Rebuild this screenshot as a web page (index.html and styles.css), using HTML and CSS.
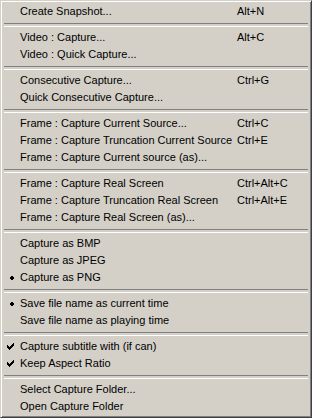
FILE: index.html
```html
<!DOCTYPE html>
<html>
<head>
<meta charset="utf-8">
<link rel="stylesheet" href="styles.css">
</head>
<body>
<div class="menu">
  <div class="item"><span class="mark"></span><span class="label">Create Snapshot...</span><span class="key">Alt+N</span></div>
  <div class="sep"></div>
  <div class="item"><span class="mark"></span><span class="label">Video : Capture...</span><span class="key">Alt+C</span></div>
  <div class="item"><span class="mark"></span><span class="label">Video : Quick Capture...</span><span class="key"></span></div>
  <div class="sep"></div>
  <div class="item"><span class="mark"></span><span class="label">Consecutive Capture...</span><span class="key">Ctrl+G</span></div>
  <div class="item"><span class="mark"></span><span class="label">Quick Consecutive Capture...</span><span class="key"></span></div>
  <div class="sep"></div>
  <div class="item"><span class="mark"></span><span class="label">Frame : Capture Current Source...</span><span class="key">Ctrl+C</span></div>
  <div class="item"><span class="mark"></span><span class="label">Frame : Capture Truncation Current Source</span><span class="key">Ctrl+E</span></div>
  <div class="item"><span class="mark"></span><span class="label">Frame : Capture Current source (as)...</span><span class="key"></span></div>
  <div class="sep"></div>
  <div class="item"><span class="mark"></span><span class="label">Frame : Capture Real Screen</span><span class="key">Ctrl+Alt+C</span></div>
  <div class="item"><span class="mark"></span><span class="label">Frame : Capture Truncation Real Screen</span><span class="key">Ctrl+Alt+E</span></div>
  <div class="item"><span class="mark"></span><span class="label">Frame : Capture Real Screen (as)...</span><span class="key"></span></div>
  <div class="sep"></div>
  <div class="item"><span class="mark"></span><span class="label">Capture as BMP</span><span class="key"></span></div>
  <div class="item"><span class="mark"></span><span class="label">Capture as JPEG</span><span class="key"></span></div>
  <div class="item"><span class="mark"><svg class="bullet" width="4" height="4" viewBox="0 0 4 4" shape-rendering="crispEdges"><path d="M1 0h2v1h1v2h-1v1h-2v-1h-1v-2h1z" fill="#000"/></svg></span><span class="label">Capture as PNG</span><span class="key"></span></div>
  <div class="sep"></div>
  <div class="item"><span class="mark"><svg class="bullet" width="4" height="4" viewBox="0 0 4 4" shape-rendering="crispEdges"><path d="M1 0h2v1h1v2h-1v1h-2v-1h-1v-2h1z" fill="#000"/></svg></span><span class="label">Save file name as current time</span><span class="key"></span></div>
  <div class="item"><span class="mark"></span><span class="label">Save file name as playing time</span><span class="key"></span></div>
  <div class="sep"></div>
  <div class="item"><span class="mark"><svg class="check" width="7" height="7" viewBox="0 0 7 7" shape-rendering="crispEdges"><path d="M6 0h1v3h-1v1h-1v1h-1v1h-1v1h-1v-1h-1v-1h-1v-3h1v1h1v1h1v-1h1v-1h1z" fill="#000"/></svg></span><span class="label">Capture subtitle with (if can)</span><span class="key"></span></div>
  <div class="item"><span class="mark"><svg class="check" width="7" height="7" viewBox="0 0 7 7" shape-rendering="crispEdges"><path d="M6 0h1v3h-1v1h-1v1h-1v1h-1v1h-1v-1h-1v-1h-1v-3h1v1h1v1h1v-1h1v-1h1z" fill="#000"/></svg></span><span class="label">Keep Aspect Ratio</span><span class="key"></span></div>
  <div class="sep"></div>
  <div class="item"><span class="mark"></span><span class="label">Select Capture Folder...</span><span class="key"></span></div>
  <div class="item"><span class="mark"></span><span class="label">Open Capture Folder</span><span class="key"></span></div>
</div>
</body>
</html>
```
FILE: styles.css
```css
* { box-sizing: border-box; }
html, body { margin: 0; padding: 0; background: #d4d0c8; }
.menu {
  width: 312px;
  height: 418px;
  background: #d4d0c8;
  border-top: 1px solid #d4d0c8;
  border-left: 1px solid #d4d0c8;
  border-right: 1px solid #404040;
  border-bottom: 1px solid #404040;
  box-shadow: inset 1px 1px 0 #ffffff, inset -1px -1px 0 #808080;
  padding: 2px;
  display: flex;
  flex-direction: column;
  font-family: "Liberation Sans", Arial, sans-serif;
  font-size: 11px;
  color: #000;
}
.item {
  height: 17px;
  line-height: 17px;
  display: grid;
  grid-template-columns: 17px 217px 1fr;
  white-space: nowrap;
}
.mark {
  display: flex;
  align-items: center;
  justify-content: flex-start;
}
.bullet { margin-left: 7px; margin-top: 1px; }
.check { margin-left: 4px; }
.label { overflow: visible; }
.sep {
  height: 9px;
  display: flex;
  align-items: center;
  padding: 0 1px;
}
.sep::before {
  content: "";
  display: block;
  width: 100%;
  height: 2px;
  margin-top: 1px;
  border-top: 1px solid #808080;
  border-bottom: 1px solid #ffffff;
}
```
